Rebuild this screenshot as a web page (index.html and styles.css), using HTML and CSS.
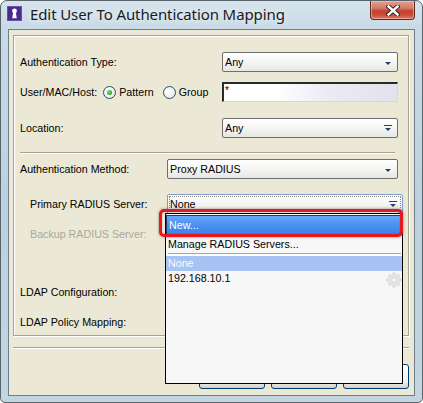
FILE: index.html
```html
<!DOCTYPE html>
<html>
<head>
<meta charset="utf-8">
<link rel="stylesheet" href="styles.css">
</head>
<body>
<div class="window">
  <div class="titlebar">
    <svg class="appicon" width="15" height="15" viewBox="0 0 15 15">
      <rect x="0" y="0" width="15" height="15" fill="#4b2a8a"/>
      <rect x="0.5" y="0.5" width="14" height="14" fill="none" stroke="#6a4fa8" stroke-width="1"/>
      <circle cx="7.5" cy="5" r="2.4" fill="#fff"/>
      <path d="M6.2 6.5 L5.2 12.2 L9.8 12.2 L8.8 6.5 Z" fill="#fff"/>
    </svg>
    <div class="title">Edit User To Authentication Mapping</div>
    <div class="close">
      <svg width="14" height="11" viewBox="0 0 14 11">
        <path d="M2.5 1.5 L11.5 9.5 M11.5 1.5 L2.5 9.5" stroke="#3b2420" stroke-width="4.4" stroke-linecap="square" fill="none"/>
        <path d="M2.5 1.5 L11.5 9.5 M11.5 1.5 L2.5 9.5" stroke="#ffffff" stroke-width="2.4" stroke-linecap="square" fill="none"/>
      </svg>
    </div>
  </div>
  <div class="client">
    <div class="panel">
      <div class="row r1">
        <span class="label">Authentication Type:</span>
        <div class="combo w176"><span class="val">Any</span><span class="arrow"></span></div>
      </div>
      <div class="row r2">
        <span class="label">User/MAC/Host:</span>
        <span class="radio on"></span><span class="rtext">Pattern</span>
        <span class="radio"></span><span class="rtext">Group</span>
        <div class="textbox">*</div>
      </div>
      <div class="row r3">
        <span class="label">Location:</span>
        <div class="combo w176"><span class="val">Any</span><span class="arrow bar"></span></div>
      </div>
      <div class="sep inner"></div>
      <div class="row r4">
        <span class="label">Authentication Method:</span>
        <div class="combo w231"><span class="val">Proxy RADIUS</span><span class="arrow"></span></div>
      </div>
      <div class="row r5 indent">
        <span class="label">Primary RADIUS Server:</span>
        <div class="combo w236 focus"><span class="val">None</span><span class="arrow bar"></span></div>
      </div>
      <div class="row r6 indent">
        <span class="label disabled">Backup RADIUS Server:</span>
      </div>
      <div class="row r7">
        <span class="label">LDAP Configuration:</span>
      </div>
      <div class="row r8">
        <span class="label">LDAP Policy Mapping:</span>
      </div>
    </div>
    <div class="sep outer"></div>
    <div class="buttons">
      <div class="btn">OK</div>
      <div class="btn">Cancel</div>
      <div class="btn">Help</div>
    </div>
  </div>

  <div class="popup">
    <div class="item sel">New...</div>
    <div class="item">Manage RADIUS Servers...</div>
    <div class="psep"></div>
    <div class="item cur">None</div>
    <div class="item">192.168.10.1</div>
    <svg class="gear" width="16" height="16" viewBox="0 0 16 16">
      <path d="M7 0.8h2l0.4 2 1.3 0.6 1.7-1.2 1.4 1.4-1.2 1.7 0.6 1.3 2 0.4v2l-2 0.4-0.6 1.3 1.2 1.7-1.4 1.4-1.7-1.2-1.3 0.6-0.4 2h-2l-0.4-2-1.3-0.6-1.7 1.2-1.4-1.4 1.2-1.7-0.6-1.3-2-0.4v-2l2-0.4 0.6-1.3-1.2-1.7 1.4-1.4 1.7 1.2 1.3-0.6z" fill="#e6e6e6" stroke="#d2d2d2" stroke-width="0.8"/>
      <circle cx="8" cy="8" r="2.4" fill="#f7f7f7" stroke="#d2d2d2" stroke-width="0.8"/>
    </svg>
  </div>
  <div class="callout"></div>
</div>
</body>
</html>
```
FILE: styles.css
```css
* { box-sizing: border-box; }
html, body { margin: 0; padding: 0; }
body {
  width: 423px;
  height: 403px;
  overflow: hidden;
  background: #ffffff;
  font-family: "Liberation Sans", Arial, sans-serif;
  font-size: 10.7px;
  color: #000;
}
.window {
  position: relative;
  width: 423px;
  height: 403px;
  border: 1px solid #5a646c;
  border-radius: 7px 7px 5px 5px;
  background: linear-gradient(to bottom, #d6e4ed 0px, #c8dae6 28px, #bcd1df 200px, #c2d5e2 403px);
  display: flex;
  flex-direction: column;
}
.titlebar {
  height: 28px;
  display: flex;
  align-items: flex-start;
  flex: none;
}
.appicon {
  margin: 5px 0 0 6px;
  flex: none;
}
.title {
  margin: 3px 0 0 8px;
  font-family: "Noto Sans", "Open Sans", sans-serif;
  font-size: 15px;
  letter-spacing: -0.1px;
  color: #1a1a1a;
  white-space: nowrap;
  text-shadow: 0 0 6px rgba(255,255,255,0.9);
}
.close {
  margin-left: auto;
  margin-right: 7px;
  width: 45px;
  height: 19px;
  border: 1px solid #5e2a22;
  border-top: none;
  border-radius: 0 0 4px 4px;
  background: linear-gradient(to bottom, #e2a091 0%, #d47a68 40%, #c2402d 55%, #c84a36 75%, #dd7b63 100%);
  box-shadow: inset 0 0 0 1px rgba(255,220,210,0.45);
  display: flex;
  align-items: center;
  justify-content: center;
}
.client {
  margin: 0 7px 0 7px;
  border: 1px solid #6f7e8a;
  background: #ebe9d6;
  height: 367px;
  padding: 0 0 6px 0;
  display: flex;
  flex-direction: column;
}
.panel {
  margin: 5px 5px 0 4px;
  height: 301px;
  border: 1px solid #a3a296;
  box-shadow: inset 1px 1px 0 #fff, 1px 1px 0 #fff;
  padding: 16px 10px 3px 6px;
  display: flex;
  flex-direction: column;
}
.row {
  height: 20px;
  display: flex;
  align-items: center;
  flex: none;
}
.r2 { margin-top: 10px; }
.r3 { margin-top: 16px; }
.r4 { margin-top: 5px; }
.r5 { margin-top: 15px; }
.r6 { margin-top: 10px; }
.r7 { margin-top: 38px; }
.r8 { margin-top: 10px; }
.indent { padding-left: 10px; }
.label { white-space: nowrap; }
.label.disabled { color: #a9a89c; }
.sep {
  height: 2px;
  border-top: 1px solid #a3a296;
  border-bottom: 1px solid #ffffff;
  flex: none;
}
.sep.inner { margin-top: 14px; margin-right: 3px; }
.sep.outer { margin: 11px 5px 0 4px; }
.combo {
  margin-left: auto;
  height: 20px;
  border: 1px solid #6e6e6e;
  border-radius: 2px;
  background: linear-gradient(to bottom, #ffffff 0%, #f6f6f4 45%, #e6e6e2 100%);
  display: flex;
  align-items: center;
  padding: 0 0 0 2px;
  position: relative;
}
.w176 { width: 176px; }
.w231 { width: 231px; }
.w236 { width: 236px; margin-right: -5px; }
.combo.focus {
  border-color: #7f9cc8;
}
.combo.focus::before {
  content: "";
  position: absolute;
  left: 1px; top: 1px; right: 1px; bottom: 1px;
  border: 1px dotted #8a8a8a;
}
.val { white-space: nowrap; }
.arrow {
  margin-left: auto;
  margin-right: 6px;
  width: 0;
  height: 0;
  border-left: 3px solid transparent;
  border-right: 3px solid transparent;
  border-top: 3px solid #243f6e;
  margin-top: 2px;
  position: relative;
}
.arrow.bar::before {
  content: "";
  position: absolute;
  left: -4px;
  top: -6px;
  width: 8px;
  height: 1px;
  background: #243f6e;
}
.radio {
  width: 13px;
  height: 13px;
  border-radius: 50%;
  border: 1px solid #1c5180;
  background: radial-gradient(circle at 40% 40%, #ffffff 0%, #f0efe8 60%, #d8d6cc 100%);
  margin-left: 6px;
  flex: none;
  position: relative;
}
.radio + .rtext { margin-left: 3px; }
.rtext ~ .radio { margin-left: 9px; }
.radio.on::after {
  content: "";
  position: absolute;
  left: 3px; top: 3px;
  width: 5px; height: 5px;
  border-radius: 50%;
  background: radial-gradient(circle at 40% 40%, #7ee07e 0%, #2ca02c 70%, #1f8a1f 100%);
}
.textbox {
  margin-left: auto;
  width: 176px;
  height: 20px;
  border-top: 2px solid #2a2a2a;
  border-left: 2px solid #2a2a2a;
  border-right: 1px solid #d6d6dc;
  border-bottom: 1px solid #d6d6dc;
  background: linear-gradient(to right, #ffffff 0%, #ffffff 30%, #ebebf4 60%, #e2e2ee 100%);
  padding: 0 0 0 1px;
  line-height: 14px;
  font-size: 10px;
}
.buttons {
  margin-top: 15px;
  padding-right: 5px;
  display: flex;
  justify-content: flex-end;
  gap: 6px;
}
.btn {
  width: 66px;
  height: 25px;
  border: 1px solid #003c74;
  border-radius: 3px;
  background: linear-gradient(to bottom, #ffffff 0%, #f3f3ef 70%, #d6d0c5 100%);
  display: flex;
  align-items: center;
  justify-content: center;
}
.popup {
  position: absolute;
  left: 164px;
  top: 212px;
  width: 238px;
  height: 171px;
  border: 1px solid #000;
  background: #f7f7f7;
  display: flex;
  flex-direction: column;
  padding-top: 1px;
}
.item {
  height: 15px;
  line-height: 15px;
  padding-left: 2px;
  white-space: nowrap;
}
.item.sel {
  height: 20px;
  line-height: 18px;
  color: #fff;
  background: linear-gradient(to bottom, #6aa8f8 0%, #4a90f0 50%, #3c84ea 100%);
  border: 1px solid #1e3a6e;
  margin: 0;
}
.item.sel + .item {
  height: 18px;
  line-height: 18px;
}
.psep {
  height: 3px;
  margin: 0 1px 0 2px;
  border-top: 1px solid #a8a8a8;
  border-bottom: 1px solid #ffffff;
}
.item.cur {
  background: #a6c3f3;
  color: #fbfdff;
  height: 15px;
}
.gear {
  position: absolute;
  right: 0px;
  top: 58px;
}
.callout {
  position: absolute;
  left: 158px;
  top: 208px;
  width: 244px;
  height: 28px;
  border: 3.5px solid #e8161e;
  border-radius: 5px;
  box-shadow: 0 0 3px rgba(0,0,0,0.45), inset 0 0 1px rgba(0,0,0,0.5);
}
```
